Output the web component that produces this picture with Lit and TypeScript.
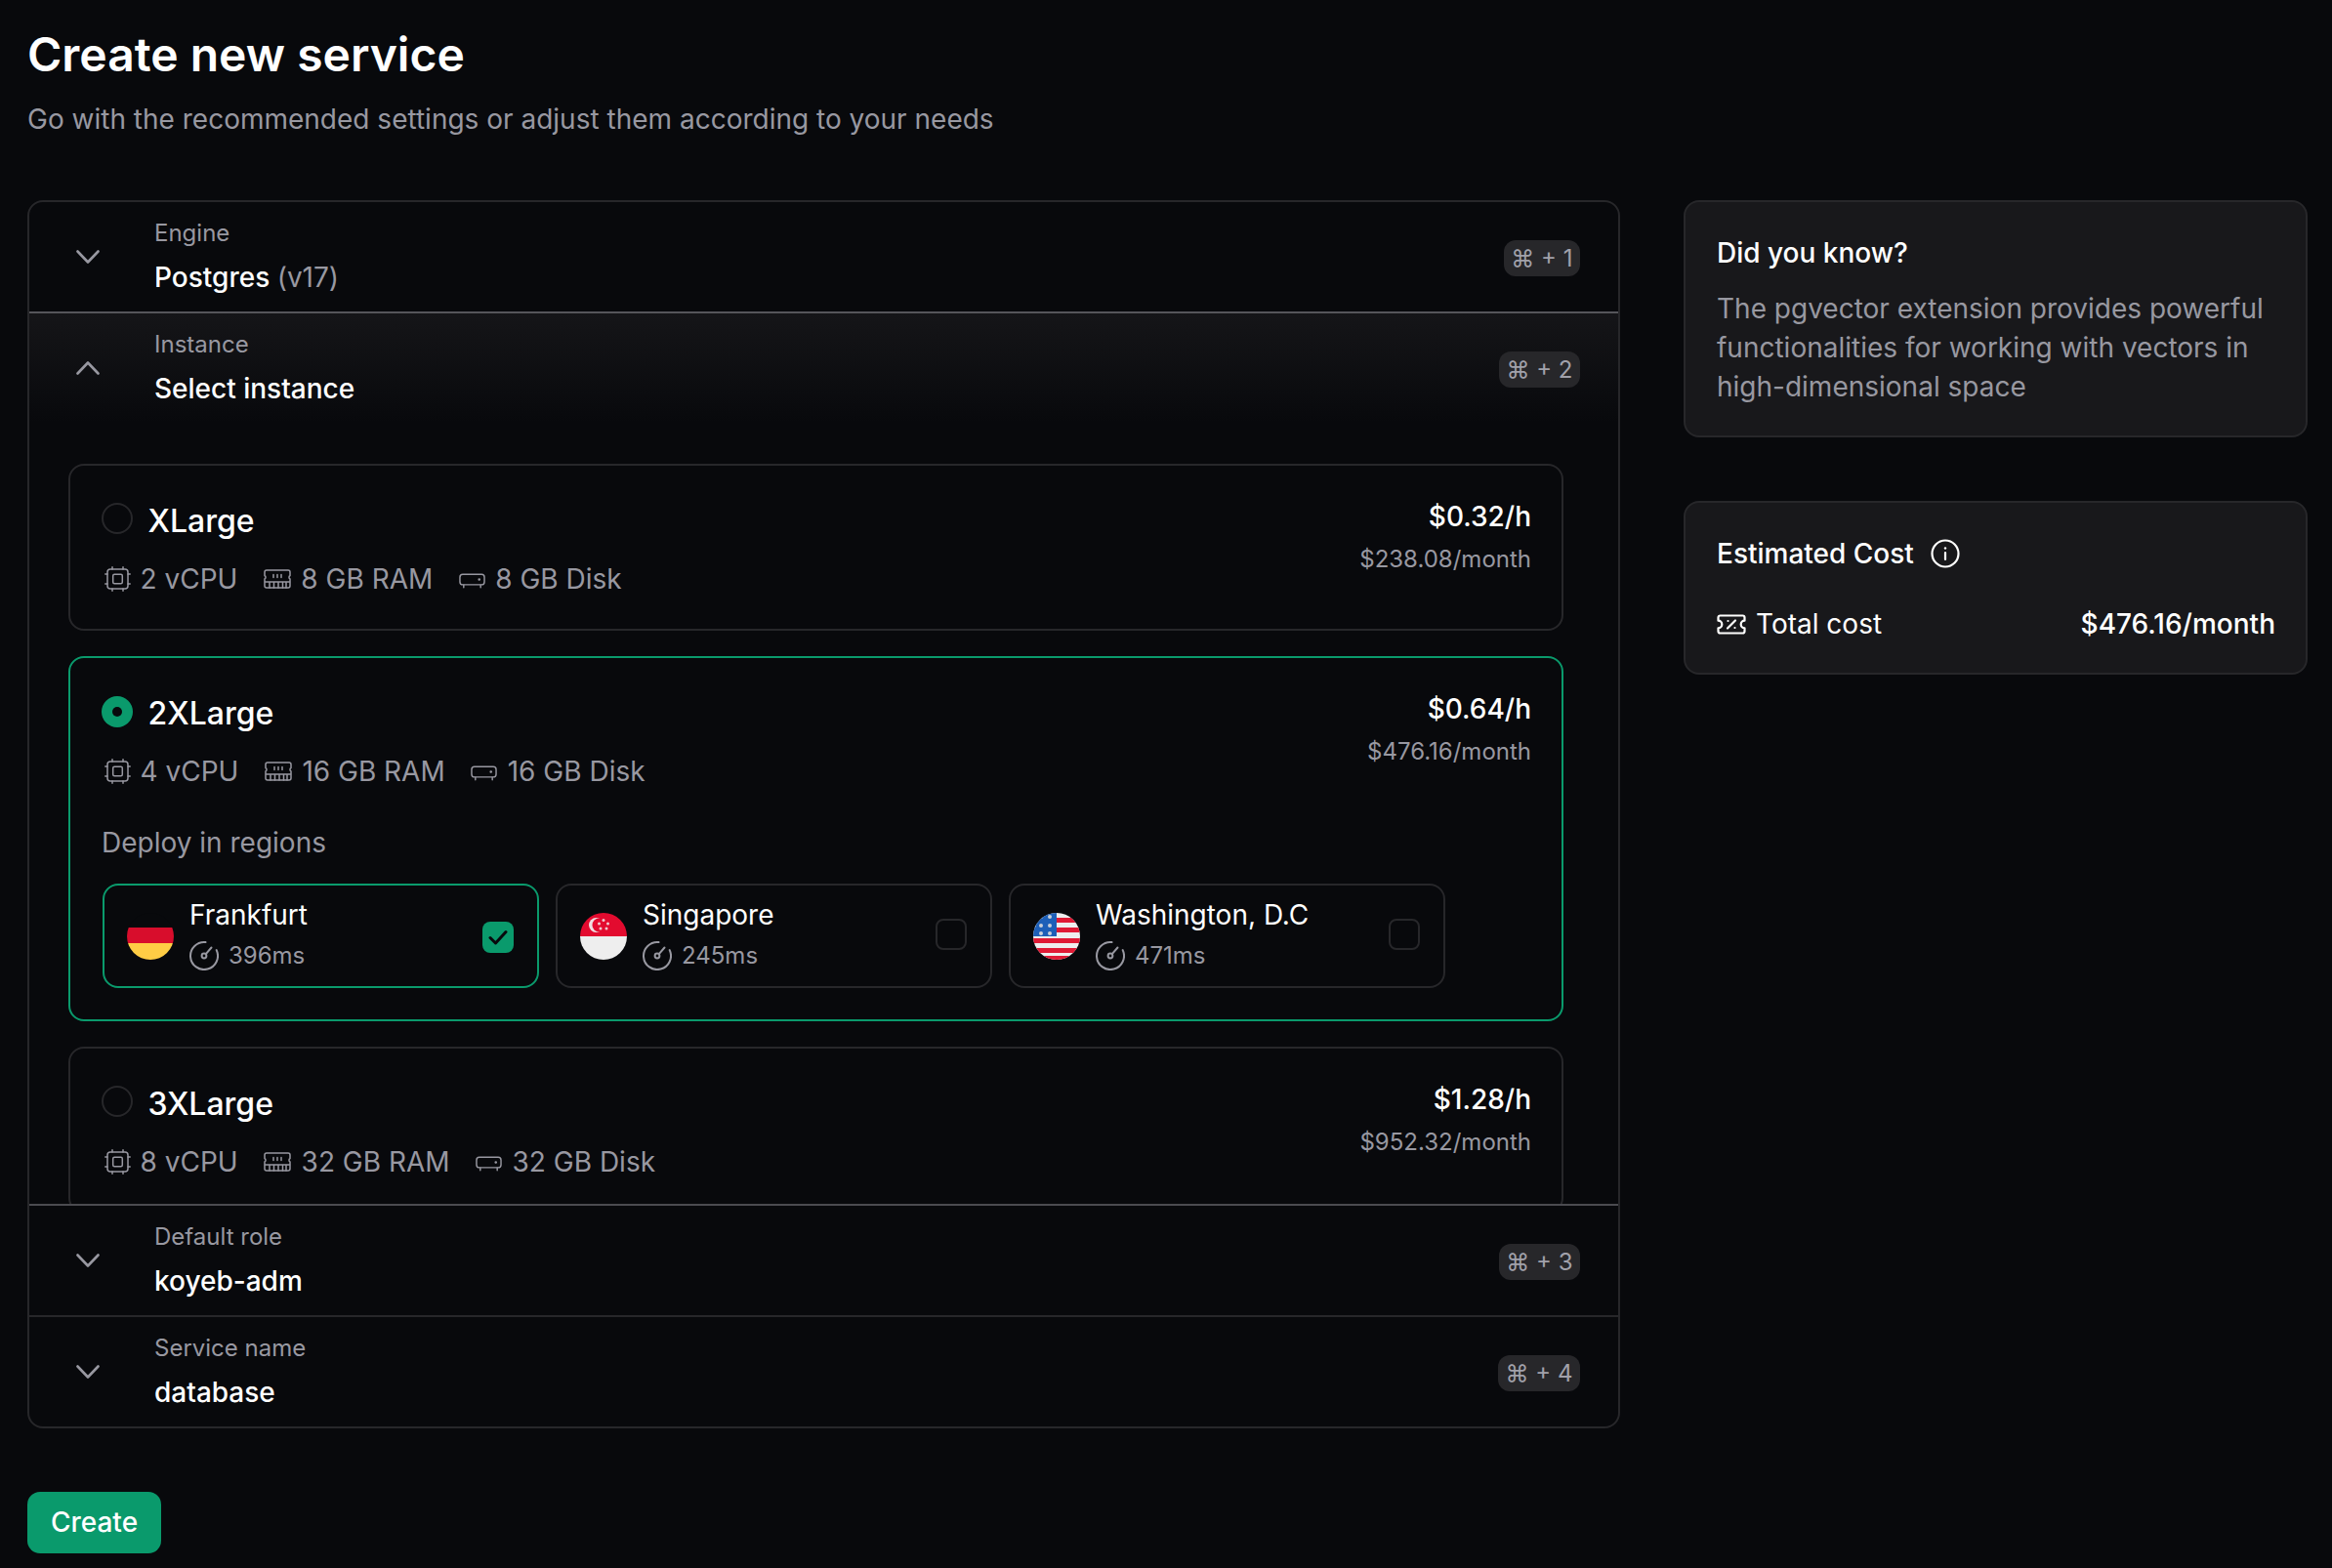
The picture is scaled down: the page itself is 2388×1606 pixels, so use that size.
import { LitElement, html, css, svg } from "lit";
import { customElement } from "lit/decorators.js";

const chevDown = html`<svg class="chev" viewBox="0 0 24 14" fill="none" stroke="currentColor" stroke-width="2.6" stroke-linecap="round" stroke-linejoin="round"><path d="M1.5 1.5 12 12.5 22.5 1.5"/></svg>`;
const chevUp = html`<svg class="chev" viewBox="0 0 24 14" fill="none" stroke="currentColor" stroke-width="2.6" stroke-linecap="round" stroke-linejoin="round"><path d="M1.5 12.5 12 1.5 22.5 12.5"/></svg>`;

const cpu = html`<svg class="ic-cpu" viewBox="0 0 27 26" fill="none" stroke="currentColor" stroke-width="1.5" stroke-linecap="round" stroke-linejoin="round"><rect x="3" y="3" width="21" height="20" rx="3"/><rect x="8.700" y="8.200" width="9.600" height="9.600" rx="1.500"/><path d="M8 .8V3M19 .8V3M8 23v2.200M19 23v2.200M.8 8H3M.8 18H3M24 8h2.200M24 18h2.200"/></svg>`;
const ram = html`<svg class="ic-ram" viewBox="0 0 28 20" fill="none" stroke="currentColor" stroke-width="1.5" stroke-linecap="round" stroke-linejoin="round"><path d="M3 1h22a2 2 0 0 1 2 2v3.500a2 2 0 0 0 0 3.500v7a2 2 0 0 1-2 2H3a2 2 0 0 1-2-2v-7a2 2 0 0 0 0-3.500V3a2 2 0 0 1 2-2Z"/><path d="M1.500 13h25M6 14v5M10.500 14v5M15 14v5M19.500 14v5M23 14v5M10 5.500v3M14 5.500v3M18 5.500v3"/></svg>`;
const disk = html`<svg class="ic-disk" viewBox="0 0 28 16" fill="none" stroke="currentColor" stroke-width="1.5" stroke-linecap="round" stroke-linejoin="round"><rect x="1" y="1" width="26" height="11" rx="3"/><path d="M5 12.500V15M23 12.500V15"/><circle cx="21.500" cy="6.500" r=".6" fill="currentColor"/></svg>`;
const gauge = html`<svg class="ic-gauge" viewBox="0 0 30 30" fill="none" stroke="currentColor" stroke-width="2" stroke-linecap="round" stroke-linejoin="round"><path d="M16.500 1.100A14 14 0 1 0 27.700 9.100"/><path d="M16.800 13.200 22.500 6.500"/><circle cx="15" cy="15" r="2.400"/></svg>`;
const info = html`<svg class="ic-info" viewBox="0 0 30 30" fill="none" stroke="currentColor" stroke-width="2.200" stroke-linecap="round"><circle cx="15" cy="15" r="13.500"/><path d="M15 14v7"/><circle cx="15" cy="9.500" r="1.200" fill="currentColor" stroke="none"/></svg>`;
const ticket = html`<svg class="ic-ticket" viewBox="0 0 30 21" fill="none" stroke="currentColor" stroke-width="2.200" stroke-linecap="round" stroke-linejoin="round"><path d="M3.500 1.500h23a2 2 0 0 1 2 2v3.200a3.800 3.800 0 0 0 0 7.600v3.200a2 2 0 0 1-2 2h-23a2 2 0 0 1-2-2v-3.200a3.800 3.800 0 0 0 0-7.600V3.500a2 2 0 0 1 2-2Z"/><path d="M19 6.500 11 14.500M11.500 7h.01M18.500 14h.01"/></svg>`;

const flagClip = (id: string) => svg`<clipPath id=${id}><circle cx="24" cy="24" r="24"/></clipPath>`;

const flagDE = html`<svg class="flag" viewBox="0 0 48 48">${flagClip("de")}<g clip-path="url(#de)"><rect width="48" height="15" fill="#08090c"/><rect y="15" width="48" height="16" fill="#d80d2c"/><rect y="31" width="48" height="17" fill="#ffcd45"/></g></svg>`;

const flagSG = html`<svg class="flag" viewBox="0 0 48 48">${flagClip("sg")}<g clip-path="url(#sg)"><rect width="48" height="24" fill="#e30b2f"/><rect y="24" width="48" height="24" fill="#eeeeee"/><circle cx="16.500" cy="12.500" r="7.500" fill="#f0dfe2"/><circle cx="19.500" cy="12.500" r="7" fill="#e30b2f"/><g fill="#f0c8cf"><circle cx="24" cy="7.500" r="1.500"/><circle cx="28.500" cy="11" r="1.500"/><circle cx="27" cy="16" r="1.500"/><circle cx="21" cy="16" r="1.500"/><circle cx="19.500" cy="11" r="1.500"/></g></g></svg>`;

const flagUS = html`<svg class="flag" viewBox="0 0 48 48">${flagClip("us")}<g clip-path="url(#us)"><rect width="48" height="48" fill="#eeeeee"/><g fill="#e01a35"><rect x="24" y="5" width="24" height="5"/><rect x="24" y="15" width="24" height="5"/><rect y="26" width="48" height="5"/><rect y="36" width="48" height="5"/><rect y="44" width="48" height="5"/></g><rect width="24" height="24" fill="#1d5fb8"/><g fill="#c9cfd8"><circle cx="8" cy="4" r="2"/><circle cx="17" cy="4" r="2"/><circle cx="8" cy="13" r="2"/><circle cx="17" cy="13" r="2"/><circle cx="8" cy="21" r="2"/><circle cx="17" cy="21" r="2"/><circle cx="1" cy="13" r="2"/></g></g></svg>`;

const INSTANCES = [
  { name: "XLarge", cpu: "2 vCPU", ram: "8 GB RAM", disk: "8 GB Disk", h: "$0.32/h", m: "$238.08/month", on: false },
  { name: "2XLarge", cpu: "4 vCPU", ram: "16 GB RAM", disk: "16 GB Disk", h: "$0.64/h", m: "$476.16/month", on: true },
  { name: "3XLarge", cpu: "8 vCPU", ram: "32 GB RAM", disk: "32 GB Disk", h: "$1.28/h", m: "$952.32/month", on: false },
];

const REGIONS = [
  { name: "Frankfurt", ms: "396ms", flag: flagDE, on: true },
  { name: "Singapore", ms: "245ms", flag: flagSG, on: false },
  { name: "Washington, D.C", ms: "471ms", flag: flagUS, on: false },
];

@customElement("app-root")
export class AppRoot extends LitElement {
  static styles = css`
    :host {
      display: block;
      min-height: 1606px;
      background: #08090c;
      color: #fff;
      font-family: Inter, "Liberation Sans", sans-serif;
      box-sizing: border-box;
      padding: 28px 25px 0 28px;
    }
    * { box-sizing: border-box; }
    h1 { margin: 0; font-size: 48px; line-height: 56px; font-weight: 600; }
    .sub { margin: 18px 0 0; font-size: 28px; line-height: 40px; color: #9898a1; }
    .main { display: flex; gap: 65px; margin-top: 63px; align-items: flex-start; }
    .left { width: 1631px; flex: none; }
    .panel { border: 2px solid #27272a; border-radius: 16px; overflow: hidden; }
    .row {
      height: 112px;
      display: flex;
      align-items: center;
      padding: 0 39px 0 48px;
    }
    .sep { border-top: 2px solid #27272a; }
    .chev { width: 24px; height: 14px; color: #9898a1; flex: none; }
    .row-text { margin-left: 56px; flex: 1; padding-bottom: 1.500px; }
    .lbl { font-size: 24px; line-height: 36px; color: #9898a1; }
    .val { font-size: 28px; line-height: 40px; font-weight: 500; margin-top: 6.500px; }
    .val span { font-weight: 400; color: #9898a1; }
    .kbd {
      height: 37px;
      padding: 0 7.500px;
      margin-top: 3px;
      border-radius: 12px;
      background: #27272a;
      color: #a1a1aa;
      font-size: 24px;
      line-height: 37px;
      white-space: pre;
    }
    .active {
      height: 916px;
      border-top: 2px solid #55555a;
      border-bottom: 2px solid #4b4b50;
      overflow: hidden;
    }
    .active .row { background: linear-gradient(#151518, #08090c); }
    .list { padding: 42px 56px 0 40px; display: flex; flex-direction: column; gap: 26px; }
    .card { border: 2px solid #27272a; border-radius: 16px; padding: 32px 31px 31px 32px; }
    .card.on { border-color: #0a9a6c; padding-bottom: 32px; }
    .head { display: flex; justify-content: space-between; align-items: flex-start; }
    .head-left { padding-top: 6px; }
    .title { display: flex; align-items: flex-start; gap: 15.500px; font-size: 32px; line-height: 38px; font-weight: 500; }
    .radio { width: 32px; height: 32px; border-radius: 50%; border: 2px solid #27272a; flex: none; display: flex; align-items: center; justify-content: center; }
    .radio.on { background: #0a9a6c; border: 0; margin-top: 1px; }
    .radio.on i { width: 10px; height: 10px; background: #08090c; border-radius: 50%; }
    .specs { display: flex; align-items: center; margin-top: 20px; font-size: 28px; line-height: 40px; color: #9898a1; }
    .spec { display: flex; align-items: center; gap: 10.500px; margin-right: 26.500px; }
    .ic-cpu { width: 27px; height: 26px; margin-left: 3px; margin-right: -1px; }
    .ic-ram { width: 28px; height: 20px; }
    .ic-disk { width: 27px; height: 16px; margin-top: 4px; }
    .price { text-align: right; }
    .ph { font-size: 28px; line-height: 40px; font-weight: 500; }
    .pm { font-size: 24px; line-height: 36px; color: #9898a1; margin-top: 6px; }
    .deploy { font-size: 28px; line-height: 40px; color: #9898a1; margin-top: 33px; }
    .regions { display: flex; gap: 17px; margin: 22px 0 0 1px; }
    .region {
      width: 447px;
      height: 107px;
      border: 2px solid #27272a;
      border-radius: 16px;
      display: flex;
      align-items: center;
      padding: 0 24px 0 23px;
      flex: none;
    }
    .region.on { border-color: #0a9a6c; }
    .flag { width: 48px; height: 48px; flex: none; }
    .rtext { margin-left: 16px; flex: 1; padding-bottom: 3px; }
    .rname { font-size: 28px; line-height: 40px; }
    .rms { display: flex; align-items: center; gap: 10px; font-size: 24px; line-height: 36px; color: #9898a1; margin-top: 4px; }
    .ic-gauge { width: 30px; height: 30px; }
    .cb { width: 32px; height: 32px; border-radius: 8px; border: 2px solid #27272a; flex: none; margin-top: -3px; }
    .cb.on { background: #0a9a6c; border: 0; margin-top: 2px; display: flex; align-items: center; justify-content: center; }
    .cb svg { width: 20px; height: 16px; }
    .create {
      display: block;
      margin-top: 65px;
      width: 137px;
      height: 63px;
      border: 0;
      border-radius: 13px;
      background: #0a9a6c;
      color: #fff;
      font: 500 28px/63px Inter, "Liberation Sans", sans-serif;
      padding: 0;
    }
    .right { width: 639px; flex: none; display: flex; flex-direction: column; gap: 65px; }
    .side { background: #18181b; border: 2px solid #27272a; border-radius: 16px; padding: 32px 32px 30px; }
    .side-t { font-size: 28px; line-height: 40px; font-weight: 500; display: flex; align-items: center; gap: 17px; }
    .side-p { font-size: 28px; line-height: 40px; color: #9898a1; margin-top: 17px; }
    .ic-info { width: 30px; height: 30px; }
    .total { display: flex; align-items: center; justify-content: space-between; margin: 32px -1px 0 0; font-size: 28px; line-height: 40px; }
    .total-l { display: flex; align-items: center; gap: 10px; }
    .ic-ticket { width: 30px; height: 21px; }
    .total-v { font-weight: 500; }
  `;

  private row(label: string, value: unknown, key: string, wrap = "") {
    return html`<div class="${wrap}"><div class="row">${chevDown}<div class="row-text"><div class="lbl">${label}</div><div class="val">${value}</div></div><div class="kbd">⌘ + ${key}</div></div></div>`;
  }

  private card(c: (typeof INSTANCES)[number]) {
    return html`<div class="card ${c.on ? "on" : ""}">
      <div class="head">
        <div class="head-left">
          <div class="title"><div class="radio ${c.on ? "on" : ""}">${c.on ? html`<i></i>` : ""}</div>${c.name}</div>
          <div class="specs">
            <div class="spec">${cpu}${c.cpu}</div>
            <div class="spec">${ram}${c.ram}</div>
            <div class="spec">${disk}${c.disk}</div>
          </div>
        </div>
        <div class="price"><div class="ph">${c.h}</div><div class="pm">${c.m}</div></div>
      </div>
      ${c.on
        ? html`<div class="deploy">Deploy in regions</div>
            <div class="regions">
              ${REGIONS.map(
                (r) => html`<div class="region ${r.on ? "on" : ""}">
                  ${r.flag}
                  <div class="rtext"><div class="rname">${r.name}</div><div class="rms">${gauge}${r.ms}</div></div>
                  <div class="cb ${r.on ? "on" : ""}">${r.on ? html`<svg viewBox="0 0 20 16" fill="none" stroke="#08090c" stroke-width="3" stroke-linecap="round" stroke-linejoin="round"><path d="M2 8.500 7.500 14 18 2.500"/></svg>` : ""}</div>
                </div>`
              )}
            </div>`
        : ""}
    </div>`;
  }

  render() {
    return html`
      <h1>Create new service</h1>
      <p class="sub">Go with the recommended settings or adjust them according to your needs</p>
      <div class="main">
        <div class="left">
          <div class="panel">
            ${this.row("Engine", html`Postgres <span>(v17)</span>`, "1")}
            <div class="active">
              <div class="row">${chevUp}<div class="row-text"><div class="lbl">Instance</div><div class="val">Select instance</div></div><div class="kbd">⌘ + 2</div></div>
              <div class="list">${INSTANCES.map((c) => this.card(c))}</div>
            </div>
            ${this.row("Default role", "koyeb-adm", "3")}
            ${this.row("Service name", "database", "4", "sep")}
          </div>
          <button class="create">Create</button>
        </div>
        <div class="right">
          <div class="side">
            <div class="side-t">Did you know?</div>
            <div class="side-p">The pgvector extension provides powerful functionalities for working with vectors in high-dimensional space</div>
          </div>
          <div class="side">
            <div class="side-t">Estimated Cost ${info}</div>
            <div class="total"><div class="total-l">${ticket}Total cost</div><div class="total-v">$476.16/month</div></div>
          </div>
        </div>
      </div>
    `;
  }
}
